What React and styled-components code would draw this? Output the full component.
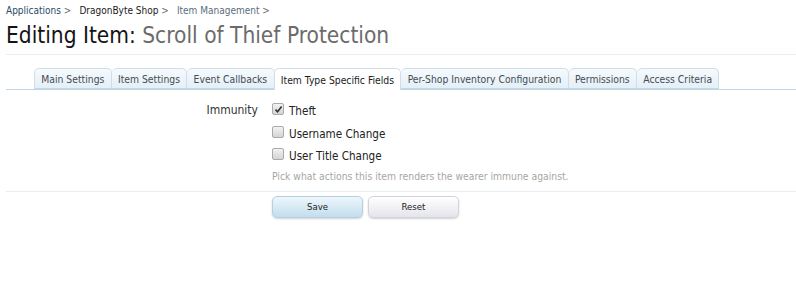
import React from "react";
import styled, { createGlobalStyle } from "styled-components";

const Global = createGlobalStyle`
  html, body { margin: 0; padding: 0; background: #fff; }
  body { font-family: "DejaVu Sans Condensed", "DejaVu Sans", sans-serif; color: #141414; }
  * { box-sizing: border-box; }
`;

const Page = styled.div`
  width: 796px;
  height: 300px;
  background: #fff;
  overflow: hidden;
`;

const Breadcrumb = styled.div`
  display: flex;
  gap: 8px;
  padding: 5px 0 0 6px;
  font-size: 10px;
  line-height: 12px;
`;

const Crumb = styled.span`
  color: ${(p) => p.$color};
  &::after { content: " >"; color: #6b6b6b; }
`;

const Title = styled.h1`
  margin: 3px 0 0 6px;
  font-weight: normal;
  font-size: 22.5px;
  line-height: 30px;
  color: #141414;
  padding-bottom: 4px;
  border-bottom: 1px solid #e6eef3;
`;

const Muted = styled.span`
  color: #6b6b6b;
`;

const TabStrip = styled.div`
  display: flex;
  margin: 13px 0 0 6px;
  padding-left: 28px;
  border-bottom: 1px solid #c2d7e6;
  height: 22px;
  align-items: flex-end;
`;

const Tab = styled.div`
  height: ${(p) => (p.$active ? "22px" : "21px")};
  margin-bottom: ${(p) => (p.$active ? "-1px" : "0")};
  padding: 0 6.3px;
  display: flex;
  align-items: center;
  font-size: 10.3px;
  color: ${(p) => (p.$active ? "#1a1a1a" : "#444c54")};
  border: 1px solid #cfdfea;
  border-bottom: ${(p) => (p.$active ? "none" : "1px solid #c2d7e6")};
  border-left-width: ${(p) => (p.$first ? "1px" : "0")};
  border-radius: 5px 5px 0 0;
  background: ${(p) =>
    p.$active ? "#fff" : "linear-gradient(to bottom, #f6fafd 0%, #e4eff7 100%)"};
  white-space: nowrap;
  ${(p) => p.$active && "border-left-width: 1px; margin-left: -1px;"}
`;

const Form = styled.div`
  display: grid;
  grid-template-columns: 258px 1fr;
  column-gap: 14px;
  padding-top: 10px;
`;

const Label = styled.div`
  text-align: right;
  font-size: 12px;
  line-height: 14px;
  color: #333;
  padding-top: 3px;
`;

const Options = styled.div`
  display: flex;
  flex-direction: column;
`;

const Option = styled.label`
  display: flex;
  align-items: center;
  gap: 5px;
  height: 22.5px;
  font-size: 11.6px;
  color: #222;
`;

const Box = styled.span`
  width: 12px;
  height: 12px;
  border: 1px solid #aaaaaa;
  border-radius: 2px;
  background: linear-gradient(to bottom, #f2f2f2, #d4d4d4);
  display: flex;
  align-items: center;
  justify-content: center;
  position: relative;
  top: -2px;
`;

const Hint = styled.div`
  font-size: 10.3px;
  color: #a6a6a6;
  margin-top: 2px;
`;

const Divider = styled.div`
  margin: 9px 0 0 6px;
  border-top: 1px solid #e4eef3;
`;

const Buttons = styled.div`
  display: flex;
  gap: 5px;
  padding: 4px 0 0 272px;
`;

const Button = styled.div`
  width: 91px;
  height: 22px;
  border-radius: 5px;
  display: flex;
  align-items: center;
  justify-content: center;
  font-size: 9.5px;
  color: #222;
  border: 1px solid ${(p) => (p.$primary ? "#b5cfe2" : "#d3d3dc")};
  background: ${(p) =>
    p.$primary
      ? "linear-gradient(to bottom, #eef6fb 0%, #c3ddee 100%)"
      : "linear-gradient(to bottom, #ffffff 0%, #e4e4ec 100%)"};
  box-shadow: 0 1px 2px rgba(0, 0, 0, 0.18);
`;

const Check = () => (
  <svg width="9" height="9" viewBox="0 0 9 9">
    <path d="M1.5 4.6 L3.6 6.8 L7.6 1.6" fill="none" stroke="#333" strokeWidth="1.6" />
  </svg>
);

const tabs = [
  "Main Settings",
  "Item Settings",
  "Event Callbacks",
  "Item Type Specific Fields",
  "Per-Shop Inventory Configuration",
  "Permissions",
  "Access Criteria",
];

export default function App() {
  return (
    <Page>
      <Global />
      <Breadcrumb>
        <Crumb $color="#2b4a66">Applications</Crumb>
        <Crumb $color="#1a1a1a">DragonByte Shop</Crumb>
        <Crumb $color="#5a6e7e">Item Management</Crumb>
      </Breadcrumb>
      <Title>
        Editing Item: <Muted>Scroll of Thief Protection</Muted>
      </Title>
      <TabStrip>
        {tabs.map((t, i) => (
          <Tab key={t} $first={i === 0} $active={i === 3}>
            {t}
          </Tab>
        ))}
      </TabStrip>
      <Form>
        <Label>Immunity</Label>
        <Options>
          <Option>
            <Box>
              <Check />
            </Box>
            Theft
          </Option>
          <Option>
            <Box />
            Username Change
          </Option>
          <Option>
            <Box />
            User Title Change
          </Option>
          <Hint>Pick what actions this item renders the wearer immune against.</Hint>
        </Options>
      </Form>
      <Divider />
      <Buttons>
        <Button $primary>Save</Button>
        <Button>Reset</Button>
      </Buttons>
    </Page>
  );
}
